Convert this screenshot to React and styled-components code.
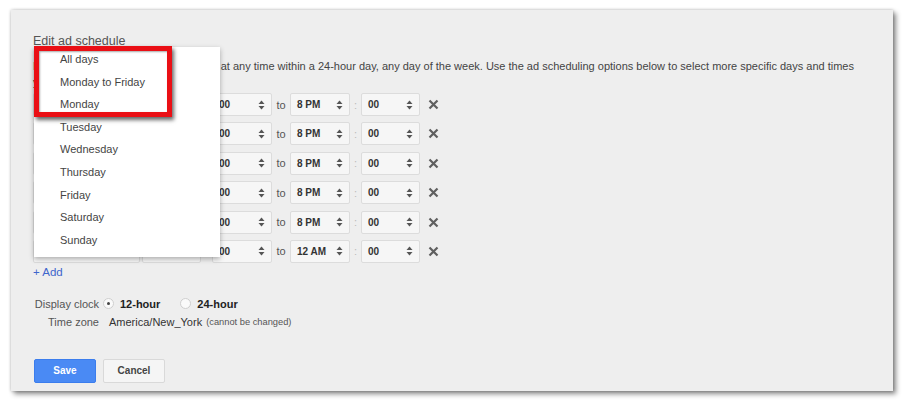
import React from 'react';
import styled, { createGlobalStyle } from 'styled-components';

const GlobalStyle = createGlobalStyle`
  body {
    margin: 0;
    background: #ffffff;
    font-family: 'Liberation Sans', Arial, sans-serif;
  }
`;

const Page = styled.div`
  width: 904px;
  height: 400px;
  box-sizing: border-box;
  padding: 10px 0 0 11px;
`;

const Panel = styled.div`
  position: relative;
  width: 882px;
  height: 381px;
  box-sizing: border-box;
  padding: 23px 22px 0 22px;
  background: #eeeeee;
  color: #444;
  box-shadow: 3px 3px 5px rgba(0, 0, 0, 0.45), 0 0 3px rgba(0, 0, 0, 0.25);
`;

const Title = styled.div`
  font-size: 12.5px;
  line-height: 16px;
  color: #555;
`;

const Description = styled.p`
  margin: 9px 0 0 0;
  max-width: 832px;
  font-size: 11px;
  line-height: 16px;
  color: #444;
`;

const Rows = styled.div`
  display: flex;
  flex-direction: column;
  gap: 6.4px;
  margin-top: 3px;
`;

const Row = styled.div`
  display: flex;
  align-items: center;
  height: 23px;
`;

const SelectBox = styled.div`
  display: flex;
  align-items: center;
  justify-content: space-between;
  width: ${(p) => p.$width}px;
  height: 23px;
  box-sizing: border-box;
  margin-left: ${(p) => p.$offset || 0}px;
  padding: 0 6px 0 6px;
  background: #f6f6f6;
  border: 1px solid #dcdcdc;
  border-radius: 2px;
  font-size: 10px;
  font-weight: bold;
  color: #333;
`;

const Sep = styled.span`
  width: ${(p) => p.$width}px;
  text-align: center;
  font-size: 11px;
  color: ${(p) => (p.$light ? '#bbb' : '#555')};
`;

const RemoveButton = styled.span`
  display: flex;
  margin-left: 8px;
`;

const AddLink = styled.div`
  margin-top: 2px;
  font-size: 11.5px;
  line-height: 14px;
  color: #3f66cc;
`;

const SettingsGrid = styled.div`
  display: grid;
  grid-template-columns: 66px auto;
  column-gap: 4px;
  margin-top: 15px;
  font-size: 11px;
`;

const Label = styled.div`
  text-align: right;
  color: #555;
  line-height: ${(p) => p.$h}px;
`;

const Value = styled.div`
  display: flex;
  align-items: center;
  height: ${(p) => p.$h}px;
  padding-left: ${(p) => p.$pad || 0}px;
  color: #333;
`;

const Radio = styled.span`
  position: relative;
  display: inline-block;
  width: 11px;
  height: 11px;
  box-sizing: border-box;
  margin-right: ${(p) => p.$gap}px;
  border-radius: 50%;
  background: #fafafa;
  border: 1px solid #cfcfcf;

  &::after {
    content: '';
    display: ${(p) => (p.$checked ? 'block' : 'none')};
    position: absolute;
    left: 3px;
    top: 3px;
    width: 3px;
    height: 3px;
    border-radius: 50%;
    background: #444;
  }
`;

const RadioText = styled.span`
  font-weight: bold;
  color: #222;
  font-size: 11px;
  margin-right: ${(p) => p.$gap || 0}px;
`;

const Note = styled.span`
  margin-left: 4px;
  font-size: 9.3px;
  color: #555;
`;

const Buttons = styled.div`
  display: flex;
  gap: 7px;
  margin-top: 29px;
  padding-left: 1px;
`;

const Button = styled.button`
  width: 62px;
  height: 24px;
  padding: 0;
  border-radius: 2px;
  font-family: 'Liberation Sans', Arial, sans-serif;
  font-size: 10px;
  font-weight: bold;
  border: 1px solid ${(p) => (p.$primary ? '#3b7ded' : '#d9d9d9')};
  background: ${(p) => (p.$primary ? '#4a8af4' : '#f5f5f5')};
  color: ${(p) => (p.$primary ? '#fff' : '#444')};
`;

const Menu = styled.div`
  position: absolute;
  left: 23px;
  top: 37px;
  width: 186px;
  height: 210px;
  box-sizing: border-box;
  padding-top: 1px;
  background: #fff;
  box-shadow: 0 2px 5px rgba(0, 0, 0, 0.3);
`;

const MenuItem = styled.div`
  height: 22.6px;
  line-height: 22.6px;
  padding-left: 26px;
  font-size: 11px;
  color: #444;
`;

const Highlight = styled.div`
  position: absolute;
  left: 23px;
  top: 36px;
  width: 138px;
  height: 71px;
  box-sizing: border-box;
  border: 5px solid #ea0f15;
  box-shadow: 2px 3px 4px rgba(0, 0, 0, 0.6), inset 1px 1px 2px rgba(0, 0, 0, 0.35);
`;

const Arrows = () => (
  <svg width="7" height="10" viewBox="0 0 7 10">
    <path d="M3.5 0.5 L6.5 4 L0.5 4 Z" fill="#555" />
    <path d="M3.5 9.5 L6.5 6 L0.5 6 Z" fill="#555" />
  </svg>
);

const Cross = () => (
  <svg width="11" height="11" viewBox="0 0 11 11">
    <path d="M1.5 1.5 L9.5 9.5 M9.5 1.5 L1.5 9.5" stroke="#5f5f5f" strokeWidth="2.2" />
  </svg>
);

const Select = ({ width, offset, value }) => (
  <SelectBox $width={width} $offset={offset}>
    <span>{value}</span>
    <Arrows />
  </SelectBox>
);

const rows = [
  { day: 'Monday', end: '8 PM' },
  { day: 'Tuesday', end: '8 PM' },
  { day: 'Wednesday', end: '8 PM' },
  { day: 'Thursday', end: '8 PM' },
  { day: 'Friday', end: '8 PM' },
  { day: 'Saturday', end: '12 AM' },
];

const days = [
  'All days',
  'Monday to Friday',
  'Monday',
  'Tuesday',
  'Wednesday',
  'Thursday',
  'Friday',
  'Saturday',
  'Sunday',
];

export default function App() {
  return (
    <Page>
      <GlobalStyle />
      <Panel>
        <Title>Edit ad schedule</Title>
        <Description>
          By default, your ads are eligible to run at any time within a 24-hour day, any day of the week.
          Use the ad scheduling options below to select more specific days and times you want your ads to show.
        </Description>
        <Rows>
          {rows.map((r) => (
            <Row key={r.day}>
              <Select width={107} value={r.day} />
              <Select width={59} offset={2} value="8 AM" />
              <Sep $width={11} $light>:</Sep>
              <Select width={60} value="00" />
              <Sep $width={18}>to</Sep>
              <Select width={60} value={r.end} />
              <Sep $width={11} $light>:</Sep>
              <Select width={59} value="00" />
              <RemoveButton>
                <Cross />
              </RemoveButton>
            </Row>
          ))}
        </Rows>
        <AddLink>+ Add</AddLink>
        <SettingsGrid>
          <Label $h={20}>Display clock</Label>
          <Value $h={20}>
            <Radio $checked $gap={6} />
            <RadioText $gap={20}>12-hour</RadioText>
            <Radio $gap={6} />
            <RadioText>24-hour</RadioText>
          </Value>
          <Label $h={16}>Time zone</Label>
          <Value $h={16} $pad={6}>
            America/New_York
            <Note>(cannot be changed)</Note>
          </Value>
        </SettingsGrid>
        <Buttons>
          <Button $primary>Save</Button>
          <Button>Cancel</Button>
        </Buttons>
        <Menu>
          {days.map((d) => (
            <MenuItem key={d}>{d}</MenuItem>
          ))}
        </Menu>
        <Highlight />
      </Panel>
    </Page>
  );
}
